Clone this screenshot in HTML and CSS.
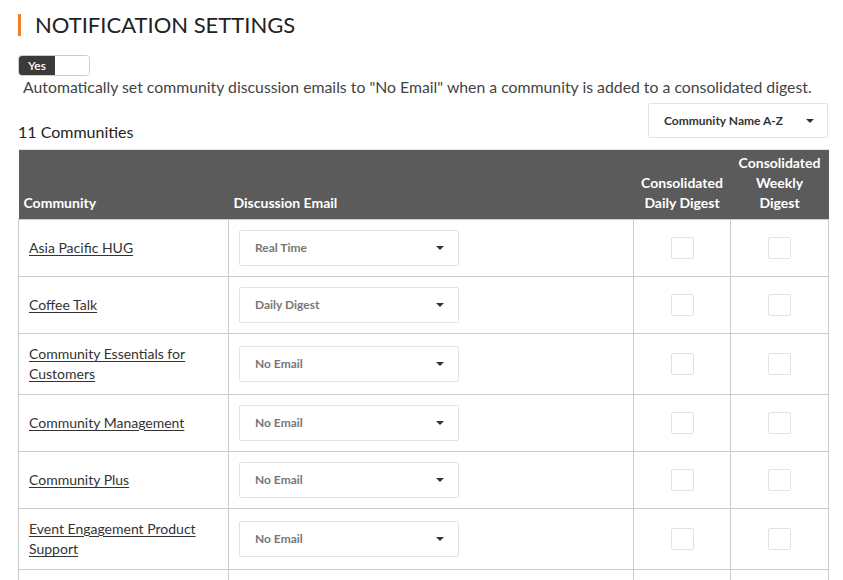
FILE: index.html
```html
<!DOCTYPE html>
<html>
<head>
<meta charset="utf-8">
<link rel="stylesheet" href="styles.css">
</head>
<body>
<div class="page">
  <h1 class="title">NOTIFICATION SETTINGS</h1>
  <div class="toggle"><span class="toggle-on">Yes</span><span class="toggle-off"></span></div>
  <p class="desc">Automatically set community discussion emails to "No Email" when a community is added to a consolidated digest.</p>
  <div class="bar">
    <div class="count">11 Communities</div>
    <div class="sort"><span>Community Name A-Z</span><span class="caret"></span></div>
  </div>
  <table class="grid">
    <colgroup>
      <col class="w-name">
      <col class="w-email">
      <col class="w-daily">
      <col class="w-weekly">
    </colgroup>
    <thead>
      <tr>
        <th>Community</th>
        <th>Discussion Email</th>
        <th class="c-chk">Consolidated Daily Digest</th>
        <th class="c-chk">Consolidated Weekly Digest</th>
      </tr>
    </thead>
    <tbody>
      <tr>
        <td><a href="#">Asia Pacific HUG</a></td>
        <td><div class="select"><span>Real Time</span><span class="caret"></span></div></td>
        <td class="chk"><span class="box"></span></td>
        <td class="chk"><span class="box"></span></td>
      </tr>
      <tr>
        <td><a href="#">Coffee Talk</a></td>
        <td><div class="select"><span>Daily Digest</span><span class="caret"></span></div></td>
        <td class="chk"><span class="box"></span></td>
        <td class="chk"><span class="box"></span></td>
      </tr>
      <tr>
        <td><a href="#">Community Essentials for Customers</a></td>
        <td><div class="select"><span>No Email</span><span class="caret"></span></div></td>
        <td class="chk"><span class="box"></span></td>
        <td class="chk"><span class="box"></span></td>
      </tr>
      <tr>
        <td><a href="#">Community Management</a></td>
        <td><div class="select"><span>No Email</span><span class="caret"></span></div></td>
        <td class="chk"><span class="box"></span></td>
        <td class="chk"><span class="box"></span></td>
      </tr>
      <tr>
        <td><a href="#">Community Plus</a></td>
        <td><div class="select"><span>No Email</span><span class="caret"></span></div></td>
        <td class="chk"><span class="box"></span></td>
        <td class="chk"><span class="box"></span></td>
      </tr>
      <tr>
        <td><a href="#">Event Engagement Product Support</a></td>
        <td><div class="select"><span>No Email</span><span class="caret"></span></div></td>
        <td class="chk"><span class="box"></span></td>
        <td class="chk"><span class="box"></span></td>
      </tr>
      <tr>
        <td><a href="#">Global Partner Network</a></td>
        <td><div class="select"><span>No Email</span><span class="caret"></span></div></td>
        <td class="chk"><span class="box"></span></td>
        <td class="chk"><span class="box"></span></td>
      </tr>
    </tbody>
  </table>
</div>
</body>
</html>
```
FILE: styles.css
```css
html, body {
  margin: 0;
  padding: 0;
  background: #fff;
}
body {
  font-family: Lato, "Open Sans", Arial, sans-serif;
  color: #333;
  overflow: hidden;
}
.page {
  padding: 14px 15px 0 18px;
}
.title {
  margin: 0;
  font-size: 22px;
  font-weight: 400;
  line-height: 22px;
  color: #222;
  border-left: 3px solid #f58024;
  padding-left: 14px;
}
.toggle {
  margin-top: 19px;
  display: flex;
  width: 70px;
  height: 19px;
  border: 1px solid #ccc;
  border-radius: 4px;
  overflow: hidden;
}
.toggle-on {
  width: 36px;
  background: #3a3a3a;
  color: #fff;
  font-size: 12px;
  line-height: 19px;
  text-align: center;
  font-weight: 600;
}
.toggle-off {
  flex: 1;
  background: #fff;
}
.desc {
  margin: 1px 0 0 0;
  padding-left: 5px;
  font-size: 15.8px;
  line-height: 20px;
  color: #444;
}
.bar {
  display: flex;
  justify-content: space-between;
  align-items: flex-end;
  margin-top: 6px;
}
.count {
  font-size: 16px;
  line-height: 20px;
  color: #222;
  margin-bottom: -4px;
}
.sort {
  width: 180px;
  height: 35px;
  box-sizing: border-box;
  border: 1px solid #e3e3e3;
  border-radius: 2px;
  display: flex;
  align-items: center;
  justify-content: space-between;
  padding: 0 13px 0 15px;
  font-size: 12px;
  font-weight: 700;
  color: #333;
}
.caret {
  width: 0;
  height: 0;
  border-left: 4px solid transparent;
  border-right: 4px solid transparent;
  border-top: 4px solid #333;
}
.grid {
  margin-top: 11px;
  width: 810px;
  border-collapse: collapse;
  table-layout: fixed;
}
.w-name { width: 210px; }
.w-email { width: 405px; }
.w-daily { width: 97px; }
.w-weekly { width: 98px; }
.grid th {
  background: #5b5b5b;
  color: #fff;
  font-size: 14px;
  font-weight: 700;
  line-height: 20px;
  text-align: left;
  vertical-align: bottom;
  padding: 3px 5px 6px 5px;
  border-top: 1px solid #e6e6e6;
}
.grid th.c-chk {
  text-align: center;
}
.grid td {
  border: 1px solid #ccc;
  padding: 10px;
  font-size: 14px;
  line-height: 20px;
  vertical-align: middle;
}
.grid td a {
  color: #333;
  text-decoration: underline;
  text-underline-offset: 2px;
}
.select {
  width: 220px;
  height: 36px;
  box-sizing: border-box;
  border: 1px solid #e3e3e3;
  border-radius: 2px;
  display: flex;
  align-items: center;
  justify-content: space-between;
  padding: 0 14px 0 15px;
  font-size: 12px;
  font-weight: 700;
  color: #777;
}
.grid td.chk {
  text-align: center;
  padding: 10px 0;
}
.box {
  display: inline-block;
  width: 21px;
  height: 20px;
  border: 1px solid #e2e2e2;
  border-radius: 2px;
  vertical-align: middle;
}
```
